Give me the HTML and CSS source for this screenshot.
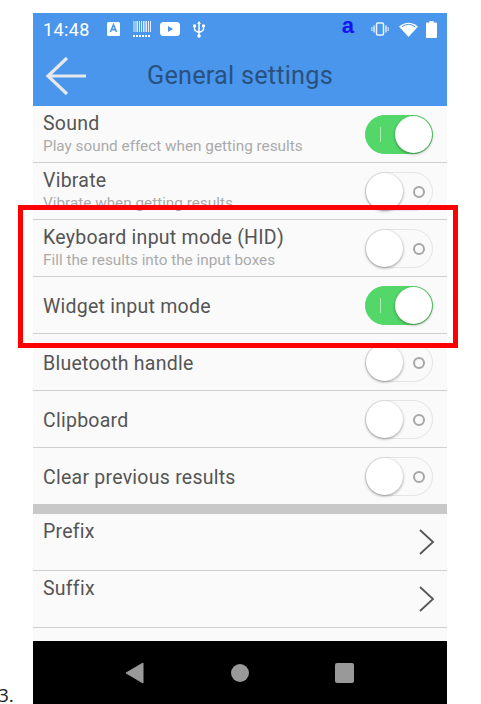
FILE: index.html
```html
<!DOCTYPE html>
<html lang="en">
  <head>
    <meta charset="UTF-8" />
    <title>General settings</title>
    <link rel="stylesheet" href="styles.css">
  </head>
  <body>
    <span class="step-number">3.</span>
    <div class="phone">
      <div class="app-header">
        <div class="status-bar">
          <span class="clock">14:48</span>
          <svg class="status-icon" style="margin-left:17px" width="13" height="14" viewBox="0 0 13 14">
            <rect x="0" y="0" width="13" height="14" rx="1.5" fill="#fff"/>
            <path d="M3.4 10 L6.5 2.8 L9.6 10 M4.6 7.6 H8.4" fill="none" stroke="#4a96ec" stroke-width="1.6"/>
          </svg>
          <svg class="status-icon" style="margin-left:13px" width="18" height="17" viewBox="0 0 18 17">
            <path d="M1 0V11M3 0V11M4.5 0V11M6.5 0V11M8.5 0V11M10.5 0V11M12 0V11M13.5 0V11M15.500 0V11M17.500 0V11" stroke="#fff" stroke-width="1" opacity=".85"/>
            <path d="M0 15H18" stroke="#fff" stroke-width="2.2" stroke-dasharray="2 1"/>
          </svg>
          <svg class="status-icon" style="margin-left:9px" width="20" height="14" viewBox="0 0 20 14">
            <rect width="20" height="14" rx="3.5" fill="#fff"/>
            <path d="M8 4 L13 7 L8 10Z" fill="#4a96ec"/>
          </svg>
          <svg class="status-icon" style="margin-left:13px" width="12" height="17" viewBox="0 0 12 17">
            <path d="M6 1.5V16M1.5 5V8Q1.5 10 6 11.5Q10.500 10 10.500 8V5" fill="none" stroke="#fff" stroke-width="1.500"/>
            <path d="M6 0L8 3H4Z M0 3.500H3V6H0Z M9 3.500H12V6H9Z" fill="#fff"/>
            <circle cx="6" cy="15" r="1.800" fill="#fff"/>
          </svg>
          <span class="status-spacer"></span>
          <span class="amazon-a">a</span>
          <svg class="status-icon" style="margin-left:17px" width="18" height="14" viewBox="0 0 18 14">
            <rect x="5.500" y="1" width="7" height="12" rx="1.200" fill="none" stroke="#fff" stroke-width="1.500" opacity=".9"/>
            <path d="M3 3.500V10.500M15 3.500V10.500" stroke="#fff" stroke-width="1.500" opacity=".8"/>
            <path d="M.8 5V9M17.200 5V9" stroke="#fff" stroke-width="1.500" opacity=".6"/>
          </svg>
          <svg class="status-icon" style="margin-left:10px" width="19" height="15" viewBox="0 0 19 15">
            <path d="M9.500 15 L0 4.500 Q9.500 -3 19 4.500Z" fill="#fff"/>
            <path d="M3 4.700 Q9.500 0 16 4.700" fill="none" stroke="#4a96ec" stroke-width="1"/>
          </svg>
          <svg class="status-icon" style="margin-left:8px" width="11" height="17" viewBox="0 0 11 17">
            <path d="M3.500 0H7.500V1.500H10Q11 1.500 11 2.500V16Q11 17 10 17H1Q0 17 0 16V2.500Q0 1.500 1 1.500H3.500Z" fill="#fff"/>
          </svg>
        </div>
        <div class="title-bar">
          <svg class="back-arrow" width="42" height="40" viewBox="0 0 42 40">
            <path d="M41 20H3M22 2 L3 20 L22 38" fill="none" stroke="#e6e8ea" stroke-width="3.200"/>
          </svg>
          <h1>General settings</h1>
        </div>
      </div>

      <div class="settings-list">
        <div class="row">
          <div class="row-text">
            <div class="row-title">Sound</div>
            <div class="row-desc">Play sound effect when getting results</div>
          </div>
          <div class="switch on"><span class="mark"></span><span class="knob"></span></div>
        </div>
        <div class="row">
          <div class="row-text">
            <div class="row-title">Vibrate</div>
            <div class="row-desc">Vibrate when getting results</div>
          </div>
          <div class="switch"><span class="knob"></span><span class="mark"></span></div>
        </div>
        <div class="row">
          <div class="row-text">
            <div class="row-title">Keyboard input mode (HID)</div>
            <div class="row-desc">Fill the results into the input boxes</div>
          </div>
          <div class="switch"><span class="knob"></span><span class="mark"></span></div>
        </div>
        <div class="row row-single">
          <div class="row-title">Widget input mode</div>
          <div class="switch on"><span class="mark"></span><span class="knob"></span></div>
        </div>
        <div class="row row-single">
          <div class="row-title">Bluetooth handle</div>
          <div class="switch"><span class="knob"></span><span class="mark"></span></div>
        </div>
        <div class="row row-single">
          <div class="row-title">Clipboard</div>
          <div class="switch"><span class="knob"></span><span class="mark"></span></div>
        </div>
        <div class="row row-single row-last">
          <div class="row-title">Clear previous results</div>
          <div class="switch"><span class="knob"></span><span class="mark"></span></div>
        </div>
        <div class="band"></div>
        <div class="row row-link">
          <div class="row-title">Prefix</div>
          <svg class="chevron" width="16" height="26" viewBox="0 0 16 26"><path d="M1 1 L14 13 L1 25" fill="none" stroke="#555" stroke-width="1.800"/></svg>
        </div>
        <div class="row row-link">
          <div class="row-title">Suffix</div>
          <svg class="chevron" width="16" height="26" viewBox="0 0 16 26"><path d="M1 1 L14 13 L1 25" fill="none" stroke="#555" stroke-width="1.800"/></svg>
        </div>
      </div>

      <div class="nav-bar">
        <svg width="19" height="22" viewBox="0 0 19 22"><path d="M18 1V21L1 11Z" fill="#999" stroke="#999" stroke-linejoin="round"/></svg>
        <span class="nav-home"></span>
        <span class="nav-recent"></span>
      </div>
    </div>
    <div class="highlight"></div>
  </body>
</html>
```

FILE: styles.css
```css
html,
body {
  margin: 0;
  height: 704px;
  overflow: hidden;
  background: #fff;
}
body {
  position: relative;
  font-family: Roboto, sans-serif;
  padding: 13px 34px 0 33px;
  box-sizing: border-box;
}
.step-number {
  position: absolute;
  left: -2px;
  top: 682px;
  font-family: "Open Sans", sans-serif;
  font-size: 19px;
  color: #222;
}
.phone {
  height: 691px;
  display: flex;
  flex-direction: column;
  background: #fafafa;
}
.app-header {
  height: 93px;
  flex-shrink: 0;
  background: #4a96ec;
}
.status-bar {
  height: 32px;
  display: flex;
  align-items: center;
  padding: 0 10px;
  color: #fff;
}
.clock {
  font-size: 18px;
  letter-spacing: 0.4px;
}
.status-spacer {
  flex: 1;
}
.amazon-a {
  font-family: "Liberation Sans", sans-serif;
  font-weight: bold;
  font-size: 22px;
  line-height: 20px;
  color: #1414f0;
  margin-top: -6px;
}
.title-bar {
  position: relative;
  height: 61px;
  display: flex;
  align-items: center;
}
.back-arrow {
  margin: 0 0 0 12px;
  flex-shrink: 0;
}
.title-bar h1 {
  margin: 0 0 0 60px;
  font-size: 25.300px;
  font-weight: normal;
  color: #28527f;
  letter-spacing: 0.2px;
}
.settings-list {
  flex: 1;
}
.row {
  height: 57px;
  box-sizing: border-box;
  border-bottom: 1px solid #cfcfcf;
  display: flex;
  align-items: center;
  justify-content: space-between;
  padding: 0 14px 0 10px;
  overflow: hidden;
}
.row-last {
  height: 56px;
  border-bottom: none;
}
.row-text {
  align-self: flex-start;
  padding-top: 6px;
}
.row-title {
  font-size: 19.500px;
  line-height: 24px;
  color: #555;
  letter-spacing: 0.25px;
}
.row-single .row-title {
  padding-top: 4px;
}
.row-desc {
  font-size: 15.300px;
  line-height: 19px;
  margin-top: 1px;
  color: #aaa;
}
.row-link {
  align-items: flex-start;
  padding-top: 6px;
}
.chevron {
  margin: 9px -2px 0 0;
}
.band {
  height: 10px;
  background: #c8c8c8;
}
.switch {
  width: 68px;
  height: 39px;
  box-sizing: border-box;
  border-radius: 20px;
  border: 1px solid #e4e4e4;
  background: #fafafa;
  display: flex;
  align-items: center;
  justify-content: space-between;
  flex-shrink: 0;
  margin-top: 1px;
}
.switch .knob {
  width: 37px;
  height: 37px;
  border-radius: 50%;
  background: #fff;
  box-shadow: 0 1px 3px rgba(0, 0, 0, 0.4);
}
.switch .mark {
  width: 12px;
  height: 12px;
  box-sizing: border-box;
  border: 2px solid #a6a6a6;
  border-radius: 50%;
  margin-right: 7px;
}
.switch.on {
  background: #53d769;
  border-color: #53d769;
}
.switch.on .mark {
  width: 1px;
  height: 15px;
  border: none;
  border-radius: 0;
  background: #a8eab4;
  margin: 0 0 0 14px;
}
.nav-bar {
  height: 63px;
  flex-shrink: 0;
  background: #000;
  display: flex;
  align-items: center;
  padding: 0 93px 0 92px;
  justify-content: space-between;
}
.nav-home {
  width: 18px;
  height: 18px;
  border-radius: 50%;
  background: #999;
}
.nav-recent {
  width: 19px;
  height: 20px;
  border-radius: 2px;
  background: #999;
}
.highlight {
  position: absolute;
  left: 18px;
  top: 205px;
  width: 440px;
  height: 143px;
  box-sizing: border-box;
  border: 5px solid #f00;
}
```
